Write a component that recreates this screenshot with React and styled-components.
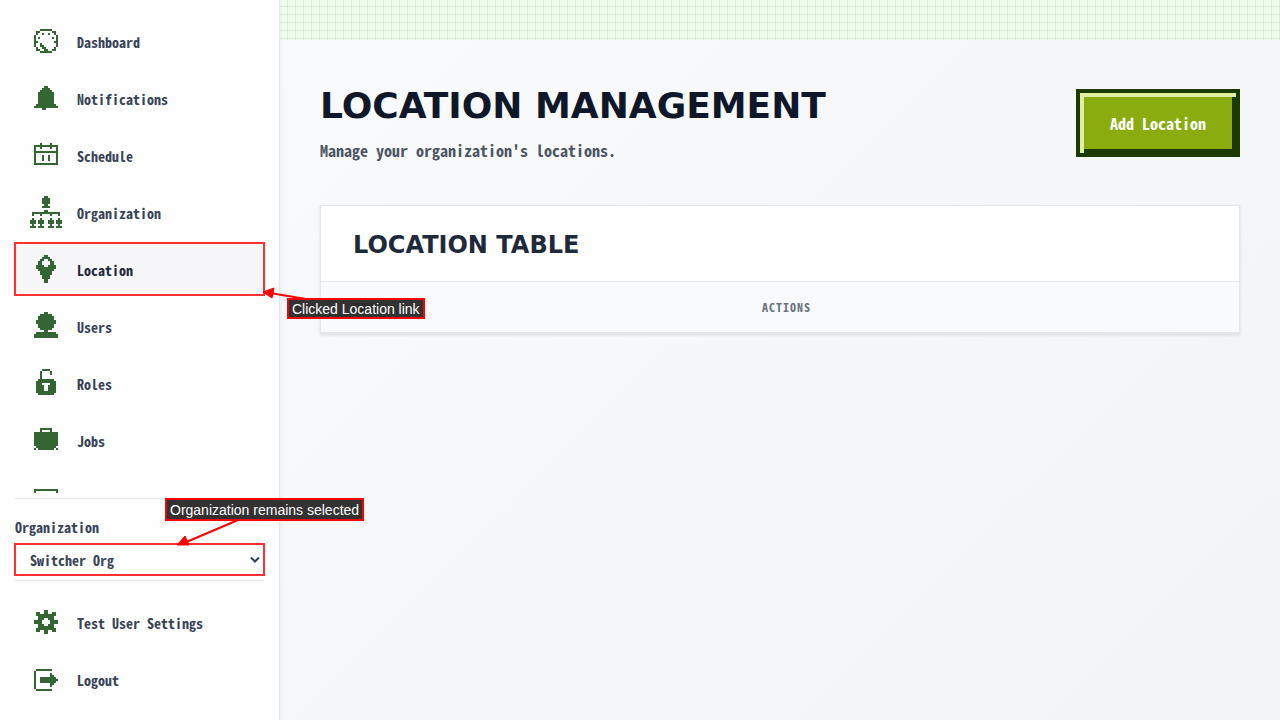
import React from "react"
import styled, { createGlobalStyle } from "styled-components"

const GlobalStyle = createGlobalStyle`
  *, *::before, *::after {
    box-sizing: border-box;
  }
  body {
    margin: 0;
    font-family: "Noto Sans Mono CJK JP", "DejaVu Sans Mono", monospace;
    font-size: 14px;
    color: #334155;
  }
`
const Page = styled.div`
  position: relative;
  display: flex;
  height: 100vh;
  overflow: hidden;
`
const Sidebar = styled.aside`
  position: relative;
  display: flex;
  flex-direction: column;
  flex: 0 0 280px;
  padding: 15px;
  background: #fefefe;
  border-right: 1px solid #e5e7eb;
  box-shadow: 1px 0 4px rgba(0, 0, 0, 0.06);
`
const NavList = styled.nav`
  display: flex;
  flex-direction: column;
  gap: 5px;
  flex: ${props => (props.$grow ? "1 1 0" : "none")};
  min-height: 0;
  margin: ${props => (props.$grow ? "0 -1px 5px" : "15px -1px 0")};
  padding: 0 1px;
  overflow: ${props => (props.$grow ? "hidden" : "visible")};
`
const NavItem = styled.a`
  display: flex;
  align-items: center;
  flex: none;
  gap: 15px;
  height: 52px;
  padding: 0 15px;
  color: ${props => (props.$active ? "#1e293b" : "#374357")};
  background: ${props => (props.$active ? "#f7f7fa" : "transparent")};
  outline: ${props => (props.$active ? "2px solid #ff3030" : "none")};
  outline-offset: -1px;
  font-weight: 700;
  line-height: 20px;
  text-decoration: none;
`
const NavText = styled.span`
  padding-top: 2px;
`
const Glyph = styled.svg`
  flex: none;
  width: 32px;
  height: 32px;
  fill: #336633;
`
const OrgBox = styled.div`
  display: flex;
  flex-direction: column;
  padding: 16px 0 5px;
  border-top: 1px solid #e5e7eb;
  border-bottom: 1px solid #e5e7eb;
`
const OrgLabel = styled.label`
  margin-bottom: 5px;
  color: #374357;
  font-weight: 700;
  line-height: 24px;
`
const SelectWrap = styled.div`
  display: grid;
  align-items: center;
  & > * {
    grid-area: 1 / 1;
  }
`
const OrgSelect = styled.select`
  appearance: none;
  width: 100%;
  height: 31px;
  padding: 1px 15px 0;
  border: 0;
  border-radius: 0;
  outline: 2px solid #ff3030;
  outline-offset: -1px;
  background: #fff;
  color: #374357;
  font: inherit;
  font-weight: 700;
`
const Chevron = styled.svg`
  justify-self: end;
  width: 10px;
  height: 8px;
  margin-right: 4px;
  pointer-events: none;
  fill: none;
  stroke: #334155;
  stroke-width: 2;
`
const Main = styled.main`
  flex: 1;
  min-width: 0;
  background: linear-gradient(135deg, #f9fafc, #f3f4f6);
`
const Banner = styled.div`
  height: 40px;
  background-color: #eeffee;
  background-image: linear-gradient(to right, transparent 7px, rgba(0, 50, 25, 0.09) 7px),
    linear-gradient(to bottom, transparent 7px, rgba(0, 50, 25, 0.09) 7px);
  background-size: 8px 8px;
  background-position: 0 -1px;
`
const Content = styled.div`
  padding: 40px;
`
const PageHead = styled.header`
  display: flex;
  align-items: center;
  justify-content: space-between;
  margin-bottom: 40px;
`
const Title = styled.h1`
  margin: 0 0 6px;
  font-family: "DejaVu Sans", sans-serif;
  font-size: 36px;
  line-height: 52px;
  color: #0f172a;
  text-transform: uppercase;
`
const Subtitle = styled.p`
  margin: 0;
  padding-bottom: 3px;
  font-size: 16px;
  font-weight: 700;
  line-height: 24px;
  color: #4b5563;
`
const AddButton = styled.button`
  height: 68px;
  padding: 0 30px;
  border: 4px solid #1c3a00;
  background: #8aac0f;
  box-shadow: inset 4px 4px 0 #e0f0a0, inset -4px -4px 0 #1c3a00;
  color: #fff;
  font: inherit;
  font-size: 16px;
  font-weight: 700;
  cursor: pointer;
`
const Card = styled.section`
  background: #fff;
  border: 1px solid #e5e7eb;
  box-shadow: 0 1px 3px rgba(0, 0, 0, 0.12);
`
const CardTitle = styled.h2`
  margin: 0;
  padding: 25px 32px 22px;
  font-family: "DejaVu Sans", sans-serif;
  font-size: 24px;
  line-height: 28px;
  color: #1e293b;
  text-transform: uppercase;
`
const Table = styled.table`
  width: 100%;
  table-layout: fixed;
  border-collapse: separate;
  border-spacing: 0;
`
const Th = styled.th`
  width: ${props => props.$width};
  height: 52px;
  padding: 0 32px 2px;
  border-top: 1px solid #e5e7eb;
  border-bottom: 1px solid #e5e7eb;
  background: #f9fafc;
  color: #6b7280;
  font-size: 12px;
  letter-spacing: 1px;
  text-align: left;
  text-transform: uppercase;
`
const Arrows = styled.svg`
  position: absolute;
  top: 0;
  left: 0;
  width: 440px;
  height: 720px;
  pointer-events: none;
  fill: #ff0000;
  stroke: #ff0000;
`
const Callout = styled.div`
  position: absolute;
  top: ${props => props.$top}px;
  left: ${props => props.$left}px;
  padding: 2px 3px 1px;
  border: 2px solid #ff0000;
  background: rgba(34, 34, 34, 0.93);
  color: #fff;
  font-family: "Liberation Sans", Arial, sans-serif;
  font-size: 14px;
  line-height: ${props => props.$line}px;
  white-space: nowrap;
`

//===================== pixel icons ====================
// each row is "y: from-to from-to", on a 16 x 16 grid
const icons = {
  dashboard: [
    [2, "5-10"], [3, "3-4 11-12"], [4, "3 6 9 12"], [5, "2 13"], [6, "2 4 11 13"],
    [7, "2 13"], [8, "2-3 12-13"], [9, "2 5 13"], [10, "2 5-6 13"], [11, "3 6-7 12"],
    [12, "3-4 7-8 11-12"], [13, "5-10"],
  ],
  bell: [
    [2, "7-8"], [3, "6-9"], [4, "5-10"], [5, "4-11"], [6, "4-11"], [7, "4-11"], [8, "4-11"],
    [9, "4-11"], [10, "4-11"], [11, "3-12"], [12, "2-13"], [13, "6-7"],
  ],
  calendar: [
    [2, "5 10"], [3, "2-13"], [4, "2 5 10 13"], [5, "2 13"], [6, "2-13"], [7, "2 13"],
    [8, "2 6 9 13"], [9, "2 6 9 13"], [10, "2 6 9 13"], [11, "2 13"], [12, "2-13"],
  ],
  organization: [
    [0, "7-8"], [1, "6-9"], [2, "6-9"], [3, "6-9"], [4, "7-8"], [5, "6-9"], [7, "7-8"],
    [8, "1-14"], [9, "1 5 10 14"], [11, "1 5 10 14"], [12, "0-2 4-6 9-11 13-15"],
    [13, "0-2 4-6 9-11 13-15"], [14, "1 5 10 14"], [15, "0-2 4-6 9-11 13-15"],
  ],
  pin: [
    [1, "7-8"], [2, "6-9"], [3, "5-6 9-10"], [4, "4-5 10-11"], [5, "4-5 10-11"], [6, "3-6 9-12"],
    [7, "3-12"], [8, "4-11"], [9, "5-10"], [10, "5-10"], [11, "6-9"], [12, "6-9"],
    [13, "7-8"], [14, "7-8"],
  ],
  user: [
    [1, "7-8"], [2, "5-10"], [3, "4-11"], [4, "4-11"], [5, "3-12"], [6, "3-12"], [7, "4-11"],
    [8, "4-11"], [9, "5-10"], [10, "7-8"], [11, "3-12"], [12, "2-13"], [13, "2-13"],
  ],
  lock: [
    [1, "6-9"], [2, "5 10"], [3, "5 10"], [4, "5"], [5, "5"], [6, "4-11"], [7, "3-12"],
    [8, "3-5 10-12"], [9, "3-6 9-12"], [10, "3-6 9-12"], [11, "3-6 9-12"], [12, "3-12"],
    [13, "4-11"],
  ],
  briefcase: [
    [2, "5-10"], [3, "5 10"], [4, "2-13"], [5, "2-13"], [6, "2-13"], [7, "2-13"], [8, "2-13"],
    [9, "2-13"], [10, "2-13"], [11, "3-12"], [12, "2 4-11 13"],
  ],
  box: [
    [4, "2-13"], [5, "2 13"], [6, "2 13"], [7, "2 13"], [8, "2 13"], [9, "2 13"], [10, "2-13"],
  ],
  gear: [
    [2, "7-8"], [3, "3-4 7-8 11-12"], [4, "3-12"], [5, "4-11"], [6, "4-6 9-11"], [7, "2-5 10-13"],
    [8, "2-5 10-13"], [9, "4-6 9-11"], [10, "4-11"], [11, "3-12"], [12, "3-4 7-8 11-12"],
    [13, "7-8"],
  ],
  logout: [
    [3, "3-10"], [4, "2"], [5, "2 10"], [6, "2 10-11"], [7, "2 5-12"], [8, "2 5-13"],
    [9, "2 5-12"], [10, "2 10-11"], [11, "2 10"], [12, "2"], [13, "3-10"],
  ],
}

const PixelIcon = ({ name }) => (
  <Glyph viewBox="0 0 16 16" shapeRendering="crispEdges" aria-hidden="true">
    {icons[name].map(([y, runs]) =>
      runs.split(" ").map(run => {
        const [from, to = from] = run.split("-").map(Number)
        return <rect key={`${y}-${from}`} x={from} y={y} width={to - from + 1} height="1" />
      })
    )}
  </Glyph>
)

const menuData = [
  { title: "Dashboard", icon: "dashboard" },
  { title: "Notifications", icon: "bell" },
  { title: "Schedule", icon: "calendar" },
  { title: "Organization", icon: "organization" },
  { title: "Location", icon: "pin", active: true },
  { title: "Users", icon: "user" },
  { title: "Roles", icon: "lock" },
  { title: "Jobs", icon: "briefcase" },
  { title: "", icon: "box" },
]

const accountData = [
  { title: "Test User Settings", icon: "gear" },
  { title: "Logout", icon: "logout" },
]

const Menu = ({ items, grow }) => (
  <NavList $grow={grow}>
    {items.map(item => (
      <NavItem key={item.icon} href="#" $active={item.active}>
        <PixelIcon name={item.icon} />
        <NavText>{item.title}</NavText>
      </NavItem>
    ))}
  </NavList>
)

//===================== page ====================
const App = () => {
  return (
    <Page>
      <GlobalStyle />
      <Sidebar>
        <Menu items={menuData} grow />
        <OrgBox>
          <OrgLabel htmlFor="organization">Organization</OrgLabel>
          <SelectWrap>
            <OrgSelect id="organization" defaultValue="switcher">
              <option value="switcher">Switcher Org</option>
            </OrgSelect>
            <Chevron viewBox="0 0 10 8" aria-hidden="true">
              <path d="M1 1.5 L5 5.5 L9 1.5" />
            </Chevron>
          </SelectWrap>
        </OrgBox>
        <Menu items={accountData} />
      </Sidebar>
      <Main>
        <Banner />
        <Content>
          <PageHead>
            <div>
              <Title>Location Management</Title>
              <Subtitle>Manage your organization's locations.</Subtitle>
            </div>
            <AddButton type="button">Add Location</AddButton>
          </PageHead>
          <Card>
            <CardTitle>Location Table</CardTitle>
            <Table>
              <thead>
                <tr>
                  <Th $width="409px">Name</Th>
                  <Th $width="auto">Actions</Th>
                </tr>
              </thead>
            </Table>
          </Card>
        </Content>
      </Main>
      <Arrows viewBox="0 0 440 720" aria-hidden="true">
        <path d="M306 299 L270 293" strokeWidth="2" />
        <path d="M263 292 L274 288 L272 298 Z" strokeWidth="1" />
        <path d="M238 520 L184 543" strokeWidth="2" />
        <path d="M177 545 L185 536 L189 545 Z" strokeWidth="1" />
      </Arrows>
      <Callout $top={298} $left={287} $line={14}>
        Clicked Location link
      </Callout>
      <Callout $top={498} $left={165} $line={16}>
        Organization remains selected
      </Callout>
    </Page>
  )
}

export default App
